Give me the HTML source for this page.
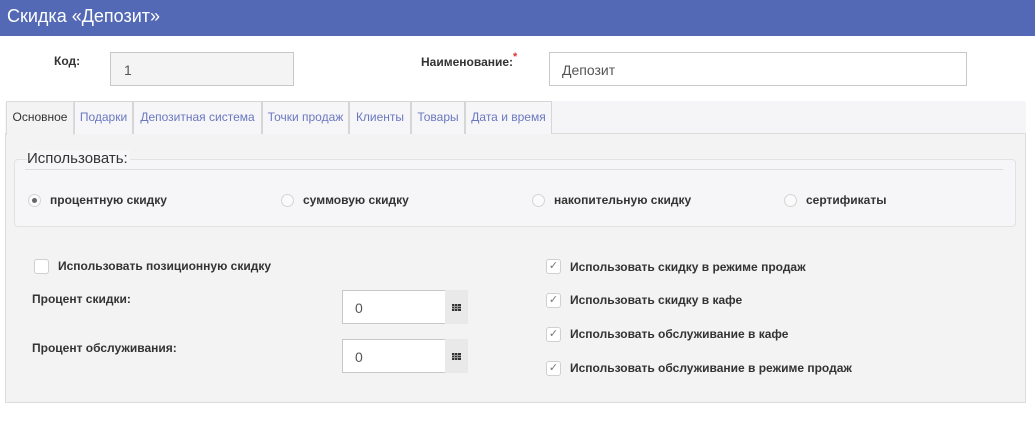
<!DOCTYPE html>
<html><head><meta charset="utf-8"><style>
*{margin:0;padding:0;box-sizing:border-box}
body{width:1035px;height:424px;background:#fff;font-family:"Liberation Sans",Arial,sans-serif;position:relative;overflow:hidden;color:#333}
.a{position:absolute}
.hdr{left:0;top:0;width:1035px;height:36px;background:#5369b5;color:#fff;font-size:18px;padding:6px 0 0 7px}
.lbl{font-size:12px;font-weight:bold;color:#333}
.inp{border:1px solid #c8c8c8;background:#fff;font-size:14px;color:#555;padding:0 0 0 12px}
.tabs{left:5px;top:101px;width:1021px;height:33px;background:#f5f5f7;border-radius:3px 3px 0 0}
.tab{top:101px;height:33px;border:1px solid #d6d6d6;border-bottom:none;font-size:12px;color:#6a78c0;text-align:center;line-height:31px;background:#f6f6f8}
.body{left:5px;top:133px;width:1021px;height:270px;background:#f3f3f3;border:1px solid #dcdcdc}
.fs{left:14px;top:159px;width:1002px;height:68px;background:#f6f6f8;border:1px solid #e2e2e2;border-radius:4px}
.rad{width:13px;height:13px;border-radius:50%;border:1px solid #d4d4d4;background:#fafafa}
.rt{font-size:12px;font-weight:bold;color:#333}
.cb{width:15px;height:15px;border:1px solid #d0d0d0;border-radius:3px;background:#fff;font-size:11px;color:#777;text-align:center;line-height:13px}
.btn{width:23px;height:34px;background:#e9e9e9}
.grid{width:9px;height:7px;background:#333;left:7px;top:14px;background-image:linear-gradient(90deg,transparent 2px,#999 2px,#999 3px,transparent 3px,transparent 5px,#999 5px,#999 6px,transparent 6px),linear-gradient(transparent 2px,#999 2px,#999 3px,transparent 3px,transparent 4px,#999 4px,#999 5px,transparent 5px)}
</style></head><body>
<div class="a hdr">Скидка «Депозит»</div>
<div class="a lbl" style="left:54px;top:54px">Код:</div>
<div class="a inp" style="left:110px;top:52px;width:184px;height:34px;background:#f4f4f4;line-height:34px;padding-left:13px">1</div>
<div class="a lbl" style="left:421px;top:55px">Наименование:<span style="color:#d33;font-size:11px;vertical-align:top;position:relative;top:-4px">*</span></div>
<div class="a inp" style="left:549px;top:52px;width:418px;height:34px;line-height:34px">Депозит</div>

<div class="a tabs"></div>
<div class="a body"></div>
<div class="a tab" style="left:6px;width:68px;color:#333;background:#f3f3f3;height:34px;border-color:#dcdcdc">Основное</div>
<div class="a tab" style="left:74px;width:59px">Подарки</div>
<div class="a tab" style="left:133px;width:129px">Депозитная система</div>
<div class="a tab" style="left:262px;width:87px">Точки продаж</div>
<div class="a tab" style="left:349px;width:62px">Клиенты</div>
<div class="a tab" style="left:411px;width:54px">Товары</div>
<div class="a tab" style="left:465px;width:87px">Дата и время</div>

<div class="a fs"></div>
<div class="a" style="left:25px;top:169px;width:978px;height:1px;background:#dedede"></div>
<div class="a" style="left:27px;top:150px;font-size:15px;color:#333;background:#f6f6f8;padding-right:2px">Использовать:</div>
<div class="a rad" style="left:28px;top:194px"><div class="a" style="left:3px;top:3px;width:5px;height:5px;border-radius:50%;background:#666"></div></div>
<div class="a rt" style="left:50px;top:193px">процентную скидку</div>
<div class="a rad" style="left:281px;top:194px"></div>
<div class="a rt" style="left:303px;top:193px">суммовую скидку</div>
<div class="a rad" style="left:532px;top:194px"></div>
<div class="a rt" style="left:554px;top:193px">накопительную скидку</div>
<div class="a rad" style="left:784px;top:194px"></div>
<div class="a rt" style="left:806px;top:193px">сертификаты</div>

<div class="a cb" style="left:34px;top:259px"></div>
<div class="a rt" style="left:58px;top:259px">Использовать позиционную скидку</div>
<div class="a rt" style="left:32px;top:292px">Процент скидки:</div>
<div class="a inp" style="left:342px;top:290px;width:104px;height:34px;line-height:34px">0</div>
<div class="a btn" style="left:445px;top:290px"><div class="a grid"></div></div>
<div class="a rt" style="left:32px;top:341px">Процент обслуживания:</div>
<div class="a inp" style="left:342px;top:339px;width:104px;height:34px;line-height:34px">0</div>
<div class="a btn" style="left:445px;top:339px"><div class="a grid"></div></div>

<div class="a cb" style="left:546px;top:259px">✓</div>
<div class="a rt" style="left:570px;top:260px">Использовать скидку в режиме продаж</div>
<div class="a cb" style="left:546px;top:293px">✓</div>
<div class="a rt" style="left:570px;top:293px">Использовать скидку в кафе</div>
<div class="a cb" style="left:546px;top:327px">✓</div>
<div class="a rt" style="left:570px;top:327px">Использовать обслуживание в кафе</div>
<div class="a cb" style="left:546px;top:361px">✓</div>
<div class="a rt" style="left:570px;top:361px">Использовать обслуживание в режиме продаж</div>
</body></html>
